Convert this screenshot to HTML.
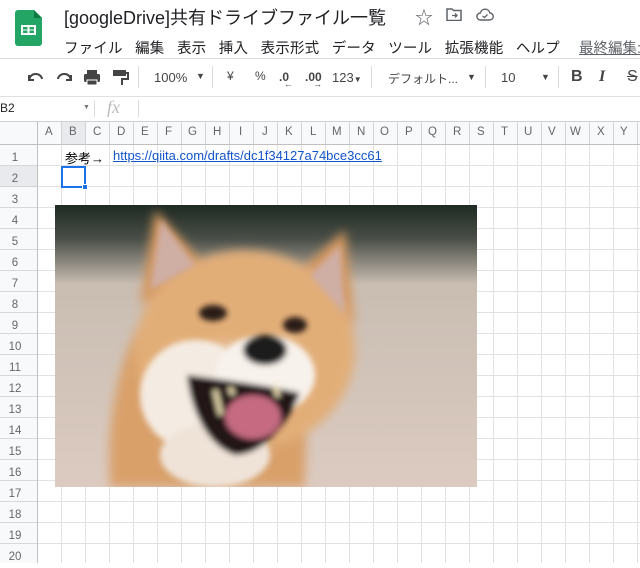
<!DOCTYPE html>
<html><head><meta charset="utf-8"><style>
*{margin:0;padding:0;box-sizing:border-box}
body{width:640px;height:563px;overflow:hidden;background:#fff;font-family:"Liberation Sans","Noto Sans CJK JP",sans-serif;position:relative;color:#3c4043}
.a{position:absolute;white-space:nowrap}
.tb{font-size:13px;color:#444}
</style></head><body>
<svg class="a" style="left:15px;top:10px" width="27" height="36" viewBox="0 0 27 36">
<path d="M3 0h16l8 8v25a3 3 0 0 1-3 3H3a3 3 0 0 1-3-3V3a3 3 0 0 1 3-3z" fill="#23a566"/>
<path d="M19 0l8 8h-8z" fill="#0f7a3f"/>
<rect x="6" y="15" width="15" height="10" fill="#fff"/>
<rect x="8" y="17" width="4.5" height="2.5" fill="#23a566"/><rect x="14.5" y="17" width="4.5" height="2.5" fill="#23a566"/>
<rect x="8" y="20.5" width="4.5" height="2.5" fill="#23a566"/><rect x="14.5" y="20.5" width="4.5" height="2.5" fill="#23a566"/>
</svg>
<div class="a" style="left:64px;top:4px;font-size:18px;color:#202124">[googleDrive]共有ドライブファイル一覧</div>
<div class="a" style="left:415px;top:4px;font-size:18px;color:#5f6368">☆</div>
<svg class="a" style="left:446px;top:8px" width="16" height="13" viewBox="0 0 16 13"><path d="M1 1h5l1.5 1.5H15v10H1z" fill="none" stroke="#5f6368" stroke-width="1.5"/><path d="M6 7.5h5M9 5.5l2 2-2 2" stroke="#5f6368" stroke-width="1.3" fill="none"/></svg>
<svg class="a" style="left:476px;top:8px" width="18" height="13" viewBox="0 0 18 13"><path d="M4.5 12h9a3.5 3.5 0 0 0 .5-7A5 5 0 0 0 4.3 5 3.5 3.5 0 0 0 4.5 12z" fill="none" stroke="#5f6368" stroke-width="1.4"/><path d="M6.5 8l2 1.5 3-3" stroke="#5f6368" stroke-width="1.3" fill="none"/></svg>
<div class="a" style="left:64px;top:37px;font-size:14.5px;letter-spacing:0.15px;color:#202124">ファイル&nbsp;&nbsp;&nbsp;編集&nbsp;&nbsp;&nbsp;表示&nbsp;&nbsp;&nbsp;挿入&nbsp;&nbsp;&nbsp;表示形式&nbsp;&nbsp;&nbsp;データ&nbsp;&nbsp;&nbsp;ツール&nbsp;&nbsp;&nbsp;拡張機能&nbsp;&nbsp;&nbsp;ヘルプ</div>
<div class="a" style="left:579px;top:37px;font-size:14.5px;color:#5f6368;text-decoration:underline">最終編集:</div>
<div class="a" style="left:0;top:58px;width:640px;height:1px;background:#dadce0"></div>
<svg class="a" style="left:27px;top:70px" width="150" height="16" viewBox="0 0 150 16">
<path d="M2 5v5h5M2.5 9.5A6 5 0 0 1 15 9" fill="none" stroke="#444" stroke-width="2"/>
<path d="M44 5v5h-5M43.5 9.5A6 5 0 0 0 31 9" fill="none" stroke="#444" stroke-width="2"/>
<rect x="60" y="0" width="10" height="4" fill="#444"/><rect x="57" y="4" width="16" height="8" rx="1.5" fill="#444"/><rect x="60" y="10" width="10" height="5" fill="#444" stroke="#fff" stroke-width="1"/>
<rect x="86" y="0" width="13" height="6" fill="#444"/><path d="M99 3h2v6h-6v6" fill="none" stroke="#444" stroke-width="2"/>
</svg>
<div class="a" style="left:138px;top:66px;width:1px;height:22px;background:#dadce0"></div>
<div class="a tb" style="left:154px;top:70px">100%</div>
<div class="a" style="left:196px;top:71px;font-size:9px;color:#444">▼</div>
<div class="a" style="left:212px;top:66px;width:1px;height:22px;background:#dadce0"></div>
<div class="a tb" style="left:227px;top:69px;font-size:12px">¥</div>
<div class="a tb" style="left:255px;top:69px;font-size:12px">%</div>
<div class="a tb" style="left:279px;top:70px;font-weight:bold;font-size:12px">.0</div>
<div class="a tb" style="left:284px;top:79px;font-size:9px">←</div>
<div class="a tb" style="left:305px;top:70px;font-weight:bold;font-size:12px">.00</div>
<div class="a tb" style="left:313px;top:79px;font-size:9px">→</div>
<div class="a tb" style="left:332px;top:70px">123<span style="font-size:8px">▼</span></div>
<div class="a" style="left:371px;top:66px;width:1px;height:22px;background:#dadce0"></div>
<div class="a tb" style="left:388px;top:70px;font-size:12px">デフォルト...</div>
<div class="a" style="left:467px;top:72px;font-size:9px;color:#444">▼</div>
<div class="a" style="left:485px;top:66px;width:1px;height:22px;background:#dadce0"></div>
<div class="a tb" style="left:501px;top:70px">10</div>
<div class="a" style="left:541px;top:72px;font-size:9px;color:#444">▼</div>
<div class="a" style="left:558px;top:66px;width:1px;height:22px;background:#dadce0"></div>
<div class="a" style="left:571px;top:68px;font-size:16px;font-weight:bold;color:#444">B</div>
<div class="a" style="left:599px;top:68px;font-size:16px;font-style:italic;font-weight:bold;color:#444;font-family:'Liberation Serif',serif">I</div>
<div class="a" style="left:627px;top:68px;font-size:16px;color:#444;text-decoration:line-through">S</div>
<div class="a" style="left:0;top:96px;width:640px;height:1px;background:#e0e0e0"></div>
<div class="a" style="left:0;top:101px;font-size:12px;color:#222">B2</div>
<div class="a" style="left:83px;top:104px;font-size:7px;color:#777">▼</div>
<div class="a" style="left:94px;top:100px;width:1px;height:17px;background:#dadce0"></div>
<div class="a" style="left:107px;top:97px;font-size:18px;font-style:italic;color:#bbb;font-family:'Liberation Serif',serif">fx</div>
<div class="a" style="left:138px;top:100px;width:1px;height:17px;background:#dadce0"></div>
<div class="a" style="left:0;top:121px;width:640px;height:1px;background:#d0d0d0"></div>
<div class="a" style="left:0;top:122px;width:640px;height:441px;
background-image:repeating-linear-gradient(90deg,transparent 0 23px,#e2e2e2 23px 24px),repeating-linear-gradient(180deg,transparent 0 20px,#e2e2e2 20px 21px);background-position:38px 2px,0 2px"></div>
<div class="a" style="left:0;top:122px;width:640px;height:23px;background:#f8f9fa;border-bottom:1px solid #c0c0c0;
background-image:repeating-linear-gradient(90deg,transparent 0 23px,#d4d4d4 23px 24px);background-position:38px 0"></div>
<div class="a" style="left:61px;top:122px;width:25px;height:23px;background:#e8eaed;border-left:1px solid #d4d4d4;border-right:1px solid #d4d4d4;border-bottom:1px solid #c0c0c0"></div>
<div class="a" style="left:0;top:145px;width:38px;height:418px;background:#f8f9fa;border-right:1px solid #c0c0c0;
background-image:repeating-linear-gradient(180deg,transparent 0 20px,#d8d8d8 20px 21px)"></div>
<div class="a" style="left:0;top:166px;width:38px;height:21px;background:#e8eaed;border-right:1px solid #c0c0c0;border-bottom:1px solid #d4d4d4"></div>
<div class="a" style="left:0;top:122px;width:38px;height:23px;background:#f8f9fa;border-right:1px solid #c0c0c0;border-bottom:1px solid #c0c0c0"></div>
<div class="a" style="left:0;top:126px;width:640px;font-size:11.5px;color:#666">
<span class="a" style="left:45px">A</span><span class="a" style="left:69px">B</span><span class="a" style="left:93px">C</span><span class="a" style="left:117px">D</span><span class="a" style="left:141px">E</span><span class="a" style="left:165px">F</span><span class="a" style="left:188px">G</span><span class="a" style="left:213px">H</span><span class="a" style="left:239px">I</span><span class="a" style="left:262px">J</span><span class="a" style="left:285px">K</span><span class="a" style="left:310px">L</span><span class="a" style="left:332px">M</span><span class="a" style="left:357px">N</span><span class="a" style="left:380px">O</span><span class="a" style="left:405px">P</span><span class="a" style="left:428px">Q</span><span class="a" style="left:453px">R</span><span class="a" style="left:477px">S</span><span class="a" style="left:501px">T</span><span class="a" style="left:524px">U</span><span class="a" style="left:548px">V</span><span class="a" style="left:570px">W</span><span class="a" style="left:597px">X</span><span class="a" style="left:620px">Y</span>
</div>
<div class="a" style="left:0;top:148px;width:30px;font-size:11.5px;color:#666;text-align:center;line-height:21px">1<br>2<br>3<br>4<br>5<br>6<br>7<br>8<br>9<br>10<br>11<br>12<br>13<br>14<br>15<br>16<br>17<br>18<br>19<br>20</div>
<div class="a" style="left:65px;top:148px;font-size:13px;color:#000">参考→</div>
<div class="a" style="left:113px;top:148px;font-size:13px;color:#1155cc;text-decoration:underline">https://qiita.com/drafts/dc1f34127a74bce3cc61</div>
<div class="a" style="left:61px;top:166px;width:25px;height:22px;border:2px solid #1a73e8"></div>
<div class="a" style="left:82px;top:184px;width:6px;height:6px;background:#1a73e8;border:1px solid #fff"></div>
<svg class="a" style="left:55px;top:205px" width="422" height="282" viewBox="0 0 422 282">
<defs>
<linearGradient id="bg" x1="0" y1="0" x2="0" y2="1"><stop offset="0" stop-color="#1e2a22"/><stop offset=".12" stop-color="#4a4f48"/><stop offset=".28" stop-color="#c9bdb2"/><stop offset="1" stop-color="#dccbc1"/></linearGradient>
<filter id="b"><feGaussianBlur stdDeviation="5"/></filter>
<filter id="b2"><feGaussianBlur stdDeviation="3"/></filter>
</defs>
<rect width="422" height="282" fill="url(#bg)"/>
<g filter="url(#b)">
<path d="M55 282 C50 200 70 140 90 110 L230 110 C260 160 250 230 250 282z" fill="#d9a06a"/>
<path d="M85 100 L100 5 L150 60z" fill="#d4975e"/>
<path d="M240 70 L290 25 L300 120z" fill="#d4975e"/>
<ellipse cx="190" cy="145" rx="110" ry="100" fill="#e2ae78"/>
<ellipse cx="170" cy="150" rx="30" ry="12" fill="#e9c9a8"/>
</g>
<g filter="url(#b2)">
<path d="M95 85 L106 15 L140 60z" fill="#cfaea4"/>
<path d="M255 70 L285 40 L290 110z" fill="#cfaea4"/>
<ellipse cx="140" cy="190" rx="55" ry="55" fill="#f4ebe2"/>
<ellipse cx="160" cy="250" rx="55" ry="32" fill="#efe3d8"/>
<ellipse cx="210" cy="170" rx="50" ry="40" fill="#f8f2ec"/>
<ellipse cx="158" cy="108" rx="14" ry="8" fill="#2a1a12"/>
<ellipse cx="240" cy="120" rx="12" ry="8" fill="#2a1a12"/>
<ellipse cx="210" cy="145" rx="22" ry="15" fill="#1e1a1a"/>
<path d="M132 170 C170 175 210 180 245 188 C230 225 205 250 180 250 C150 240 135 200 132 170z" fill="#231616"/>
<ellipse cx="198" cy="212" rx="28" ry="22" fill="#c56a80"/>
<path d="M160 185 l6 25 M175 182 l3 8 M220 180 l3 12" stroke="#e8dcb0" stroke-width="5"/>
</g>
</svg>
</body></html>
